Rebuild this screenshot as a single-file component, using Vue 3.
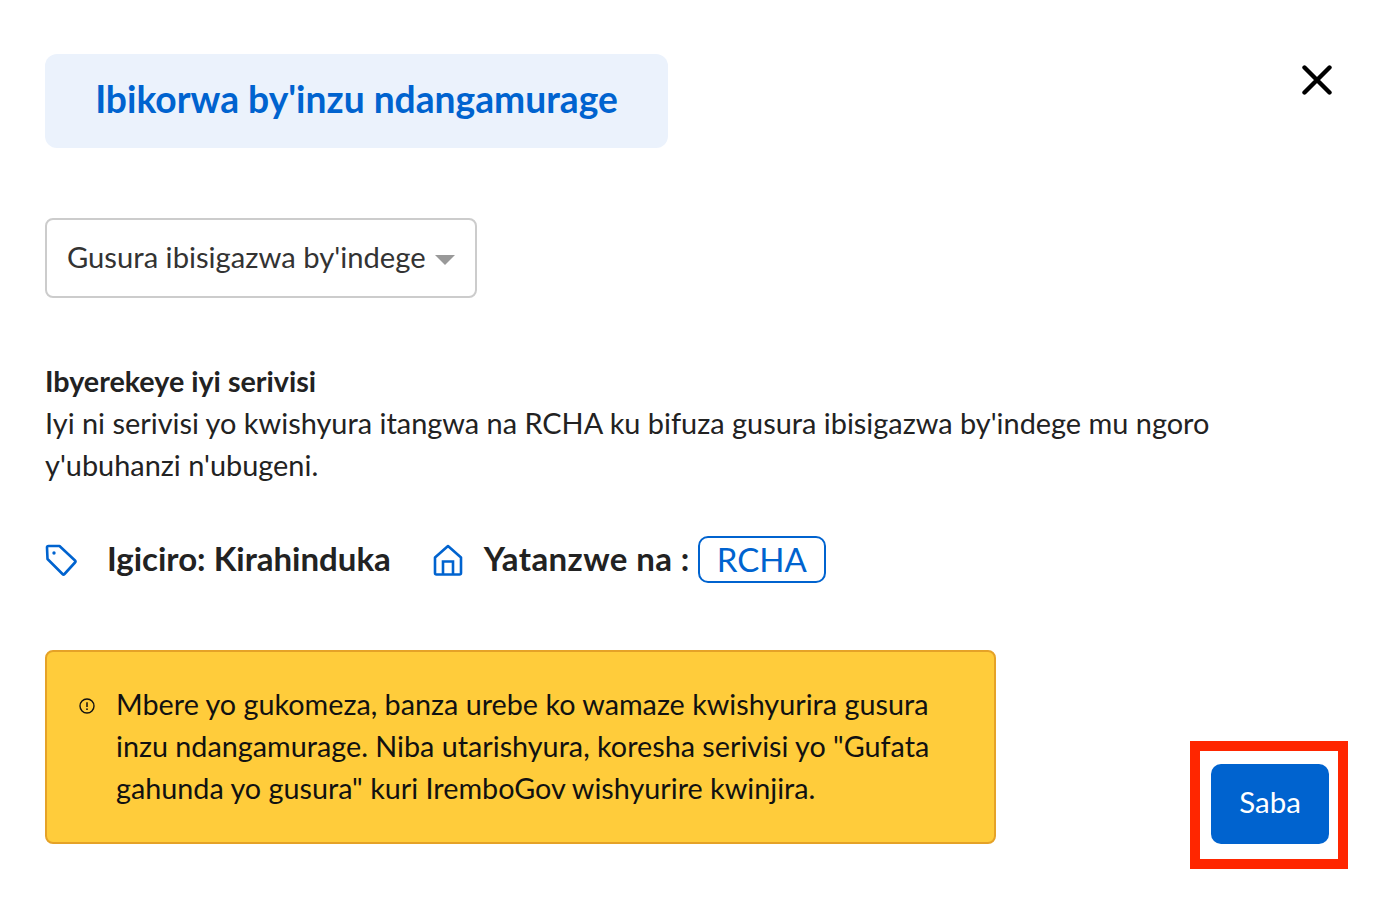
<template>
  <div class="page">
    <header class="top">
      <h1 class="title">Ibikorwa by'inzu ndangamurage</h1>
      <button class="close" aria-label="Close">
        <svg width="30" height="30" viewBox="0 0 30 30">
          <path d="M2.5 2.5L27.5 27.5M27.5 2.5L2.5 27.5" stroke="#000" stroke-width="4.4" stroke-linecap="round" fill="none" />
        </svg>
      </button>
    </header>

    <div class="select">
      <span>Gusura ibisigazwa by'indege</span>
      <i class="caret"></i>
    </div>

    <section class="about">
      <strong>Ibyerekeye iyi serivisi</strong>
      <p>Iyi ni serivisi yo kwishyura itangwa na RCHA ku bifuza gusura ibisigazwa by'indege mu ngoro y'ubuhanzi n'ubugeni.</p>
    </section>

    <div class="meta">
      <svg class="tag" width="32" height="32" viewBox="0 0 32 32" fill="none">
        <path d="M2 3.5Q2 2 3.5 2H14.5L30 16.5Q31 17.5 30 18.5L19.5 30Q18.5 31 17.5 30L2.5 15Z" stroke="#0063cf" stroke-width="2.6" stroke-linejoin="round" />
        <circle cx="9" cy="9" r="1.7" fill="#0063cf" />
      </svg>
      <span class="price">Igiciro: Kirahinduka</span>
      <svg class="house" width="30" height="32" viewBox="0 0 30 32" fill="none">
        <path d="M2 13.5L15 2L28 13.5V29Q28 30.5 26.5 30.5H3.5Q2 30.5 2 29Z" stroke="#0063cf" stroke-width="2.6" stroke-linejoin="round" />
        <path d="M10 30V17.5H20V30" stroke="#0063cf" stroke-width="2.6" />
      </svg>
      <span class="by">Yatanzwe na :</span>
      <span class="chip">RCHA</span>
    </div>

    <div class="bottom">
      <div class="notice">
        <svg class="info" width="16" height="16" viewBox="0 0 16 16" fill="none">
          <circle cx="8" cy="8" r="7" stroke="#111" stroke-width="1.4" />
          <path d="M8 4.2V9" stroke="#111" stroke-width="1.5" />
          <circle cx="8" cy="11.2" r="0.9" fill="#111" />
        </svg>
        <p>Mbere yo gukomeza, banza urebe ko wamaze kwishyurira gusura inzu ndangamurage. Niba utarishyura, koresha serivisi yo "Gufata gahunda yo gusura" kuri IremboGov wishyurire kwinjira.</p>
      </div>
      <div class="action">
        <button class="next">Saba</button>
      </div>
    </div>
  </div>
</template>

<script setup>
</script>

<style>
body {
  background: #fff;
}
</style>

<style scoped>
.page {
  width: 1386px;
  height: 914px;
  box-sizing: border-box;
  padding: 54px 38px 0 45px;
  font-family: "Lato", "Noto Sans", sans-serif;
  color: #222;
}

.top {
  display: flex;
  justify-content: space-between;
  align-items: flex-start;
}

.title {
  margin: 0;
  width: 623px;
  height: 94px;
  box-sizing: border-box;
  background: #ebf2fc;
  border-radius: 12px;
  color: #0063cf;
  font-size: 37.2px;
  font-weight: 700;
  line-height: 90px;
  text-align: center;
}

.close {
  margin: 11px 16px 0 0;
  padding: 0;
  width: 30px;
  height: 30px;
  border: none;
  background: none;
}

.select {
  margin-top: 70px;
  width: 432px;
  height: 80px;
  box-sizing: border-box;
  border: 2px solid #ccc;
  border-radius: 8px;
  padding: 0 20px;
  display: flex;
  align-items: center;
  justify-content: space-between;
  font-size: 29.2px;
  color: #333;
}

.select span {
  margin-top: -4px;
}

.caret {
  width: 0;
  height: 0;
  border-left: 10px solid transparent;
  border-right: 10px solid transparent;
  border-top: 10px solid #999;
  margin-top: 4px;
}

.about {
  margin-top: 62px;
  font-size: 28.9px;
  line-height: 42px;
}

.about strong {
  display: block;
  font-size: 28.7px;
}

.about p {
  margin: 0;
  width: 1190px;
}

.meta {
  margin-top: 48px;
  display: flex;
  align-items: center;
  height: 48px;
  font-size: 33px;
  font-weight: 700;
}

.tag {
  margin-top: 3px;
  margin-right: 30px;
}

.house {
  margin-top: 3px;
  margin-left: 42px;
  margin-right: 21px;
}

.by {
  letter-spacing: 0.4px;
}

.chip {
  margin: 2px 0 0 8px;
  height: 47px;
  box-sizing: border-box;
  padding: 0 17px;
  border: 2px solid #0063cf;
  border-radius: 10px;
  color: #0063cf;
  font-weight: 400;
  line-height: 42px;
}

.bottom {
  margin-top: 68px;
  display: flex;
  justify-content: space-between;
  align-items: flex-end;
}

.notice {
  width: 951px;
  height: 194px;
  box-sizing: border-box;
  background: #ffcc3b;
  border: 2px solid #e5a227;
  border-radius: 8px;
  padding: 31px 32px 0;
  display: flex;
  gap: 21px;
  color: #111;
}

.info {
  flex: none;
  margin-top: 15px;
}

.notice p {
  margin: 0;
  font-size: 28.75px;
  line-height: 42px;
}

.action {
  width: 158px;
  height: 128px;
  box-sizing: border-box;
  border: 10px solid #ff2600;
  padding: 13px 9px 0 11px;
  margin-bottom: -25px;
}

.next {
  display: block;
  width: 118px;
  height: 80px;
  border: none;
  border-radius: 10px;
  background: #0063cf;
  color: #fff;
  font-family: inherit;
  font-size: 29.5px;
  padding-bottom: 6px;
}
</style>
